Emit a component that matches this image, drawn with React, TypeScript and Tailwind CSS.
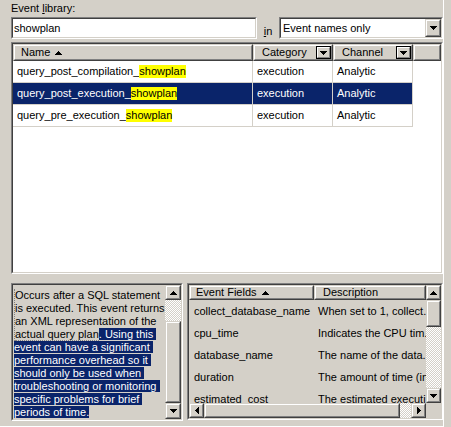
import type { ReactNode } from "react";

// Windows-classic "Event library" picker: search box, event grid, description
// pane and the event-field list beneath it.

type Dir = "up" | "down" | "left" | "right";

const ARROWS: Record<Dir, { w: number; h: number; d: string }> = {
  up: { w: 7, h: 4, d: "M3 0h1v1H3zM2 1h3v1H2zM1 2h5v1H1zM0 3h7v1H0z" },
  down: { w: 7, h: 4, d: "M0 0h7v1H0zM1 1h5v1H1zM2 2h3v1H2zM3 3h1v1H3z" },
  right: { w: 4, h: 7, d: "M0 0h1v7H0zM1 1h1v5H1zM2 2h1v3H2zM3 3h1v1H3z" },
  left: { w: 4, h: 7, d: "M3 0h1v7H3zM2 1h1v5H2zM1 2h1v3H1zM0 3h1v1H0z" },
};

function Arrow({ dir }: { dir: Dir }) {
  const a = ARROWS[dir];
  return (
    <svg width={a.w} height={a.h} viewBox={`0 0 ${a.w} ${a.h}`} shapeRendering="crispEdges" className="shrink-0">
      <path d={a.d} fill="#000" />
    </svg>
  );
}

function Sunken({ className = "", inner = "", children }: { className?: string; inner?: string; children?: ReactNode }) {
  return (
    <div className={`border border-t-[#808080] border-l-[#808080] border-r-white border-b-white ${className}`}>
      <div className={`h-full w-full border border-t-[#404040] border-l-[#404040] border-r-[#d4d0c8] border-b-[#d4d0c8] ${inner}`}>
        {children}
      </div>
    </div>
  );
}

function Raised({ className = "", inner = "justify-center", children }: { className?: string; inner?: string; children?: ReactNode }) {
  return (
    <div className={`shrink-0 bg-[#d4d0c8] border border-t-[#d4d0c8] border-l-[#d4d0c8] border-r-[#404040] border-b-[#404040] ${className}`}>
      <div className={`flex h-full w-full items-center border border-t-white border-l-white border-r-[#808080] border-b-[#808080] ${inner}`}>
        {children}
      </div>
    </div>
  );
}

const checker = "bg-[repeating-conic-gradient(#ffffff_0%_25%,#d4d0c8_0%_50%)] bg-size-[2px_2px]";

function Hl({ children }: { children: ReactNode }) {
  return <span className="bg-[#ffff00] text-black">{children}</span>;
}

const EVENTS = [
  { prefix: "query_post_compilation_", selected: false },
  { prefix: "query_post_execution_", selected: true },
  { prefix: "query_pre_execution_", selected: false },
];

const FIELDS = [
  ["collect_database_name", "When set to 1, collect."],
  ["cpu_time", "Indicates the CPU tim."],
  ["database_name", "The name of the data."],
  ["duration", "The amount of time (in"],
  ["estimated_cost", "The estimated executi."],
];

const PLAIN = ["Occurs after a SQL statement", "is executed. This event returns", "an XML representation of the"];
const SELECTED = [
  "event can have a significant ",
  "performance overhead so it ",
  "should only be used when ",
  "troubleshooting or monitoring ",
  "specific problems for brief ",
  "periods of time.",
];

function FilterButton() {
  return (
    <div className="flex h-full w-[15px] shrink-0 items-center justify-center border border-black bg-[#d4d0c8]">
      <div className="flex h-full w-full items-center justify-center border border-t-white border-l-white border-r-[#808080] border-b-[#808080]">
        <Arrow dir="down" />
      </div>
    </div>
  );
}

export default function App() {
  return (
    <div className="h-[427px] w-[451px] bg-[#d4d0c8] font-['Liberation_Sans',Arial,sans-serif] text-[11px] leading-[13px] text-black">
      <div className="flex h-[427px] w-[444px] flex-col border-r border-b border-white pl-[11px] pt-[2px]">
        <div className="h-[13px]">
          Event <span className="underline">l</span>ibrary:
        </div>

        <div className="mt-[2px] flex h-[22px] w-[432px]">
          <Sunken className="w-[246px]" inner="flex items-center bg-white pl-[1px]">
            showplan
          </Sunken>
          <div className="flex w-[22px] items-end justify-center pb-[1px]">
            <span>
              <span className="underline">i</span>n
            </span>
          </div>
          <Sunken className="w-[164px]" inner="flex bg-white">
            <div className="flex flex-1 items-center pl-[2px]">Event names only</div>
            <Raised className="h-full w-[16px]">
              <Arrow dir="down" />
            </Raised>
          </Sunken>
        </div>

        {/* event grid */}
        <Sunken className="mt-[3px] h-[232px] w-[432px]" inner="flex flex-col bg-white">
          <div className="flex h-[17px]">
            <Raised className="h-full w-[240px]" inner="justify-start gap-[5px] pl-[6px]">
              Name <Arrow dir="up" />
            </Raised>
            <Raised className="h-full w-[80px]" inner="justify-start">
              <span className="flex-1 pl-[7px]">Category</span>
              <FilterButton />
            </Raised>
            <Raised className="h-full w-[80px]" inner="justify-start">
              <span className="flex-1 pl-[7px]">Channel</span>
              <FilterButton />
            </Raised>
            <Raised className="h-full flex-1" />
          </div>
          {EVENTS.map((e) => (
            <div
              key={e.prefix}
              className={`flex h-[22px] w-[400px] border-b border-[#d4d0c8] ${e.selected ? "bg-[#0a246a] text-white" : ""}`}
            >
              <div className="flex w-[240px] items-center whitespace-nowrap border-r border-[#d4d0c8] pl-[4px]">
                {e.prefix}
                <Hl>showplan</Hl>
              </div>
              <div className="flex w-[80px] items-center border-r border-[#d4d0c8] pl-[4px]">execution</div>
              <div className="flex w-[80px] items-center border-r border-[#d4d0c8] pl-[4px]">Analytic</div>
            </div>
          ))}
        </Sunken>

        <div className="mt-[9px] flex w-[432px] gap-[4px]">
          {/* description pane */}
          <Sunken className="h-[138px] w-[172px]" inner="flex">
            <div className="flex-1 overflow-hidden whitespace-pre pt-[4px]">
              <div className="ml-[1px] border-l border-dotted border-[#808080] pl-0">
                {PLAIN.map((l) => (
                  <div key={l}>{l}</div>
                ))}
                <div>
                  <span className="border-b border-dotted border-[#808080]">actual query plan</span>
                  <span className="bg-[#0a246a] text-white">. Using this </span>
                </div>
              </div>
              {SELECTED.map((l) => (
                <div key={l} className="pl-[1px]">
                  <span className="bg-[#0a246a] text-white">{l}</span>
                </div>
              ))}
            </div>
            <div className="flex w-[16px] flex-col">
              <Raised className="h-[15px] w-full">
                <Arrow dir="up" />
              </Raised>
              <div className={`h-[21px] ${checker}`} />
              <Raised className="flex-1" />
              <Raised className="h-[16px] w-full">
                <Arrow dir="down" />
              </Raised>
            </div>
          </Sunken>

          {/* event fields */}
          <Sunken className="h-[137px] w-[256px]" inner="flex flex-col">
            <div className="flex h-[118px]">
              <div className="flex flex-1 flex-col overflow-hidden">
                <div className="flex h-[15px]">
                  <Raised className="h-full w-[125px]" inner="justify-start gap-[5px] pl-[5px]">
                    Event Fields <Arrow dir="up" />
                  </Raised>
                  <Raised className="h-full flex-1" inner="justify-start pl-[7px]">
                    Description
                  </Raised>
                </div>
                {FIELDS.map(([name, desc]) => (
                  <div key={name} className="flex h-[22px] shrink-0 whitespace-nowrap">
                    <div className="flex w-[125px] items-center pl-[5px]">{name}</div>
                    <div className="flex flex-1 items-center overflow-hidden pl-[4px]">{desc}</div>
                  </div>
                ))}
              </div>
              <div className="flex w-[15px] flex-col">
                <Raised className="h-[15px] w-full">
                  <Arrow dir="up" />
                </Raised>
                <Raised className="h-[27px] w-full" />
                <div className={`flex-1 ${checker}`} />
                <Raised className="h-[15px] w-full">
                  <Arrow dir="down" />
                </Raised>
              </div>
            </div>
            <div className="flex h-[15px]">
              <Raised className="h-full w-[15px]">
                <Arrow dir="left" />
              </Raised>
              <Raised className="h-full w-[196px]" />
              <div className={`flex-1 ${checker}`} />
              <Raised className="h-full w-[15px]">
                <Arrow dir="right" />
              </Raised>
              <div className="w-[15px]" />
            </div>
          </Sunken>
        </div>
      </div>
    </div>
  );
}
